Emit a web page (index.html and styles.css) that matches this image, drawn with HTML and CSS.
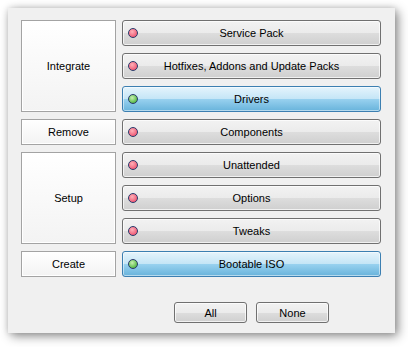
FILE: index.html
```html
<!DOCTYPE html>
<html>
<head>
<meta charset="utf-8">
<link rel="stylesheet" href="styles.css">
</head>
<body>
<div class="panel">
  <div class="grid">
    <div class="group g-int">Integrate</div>
    <div class="group g-rem">Remove</div>
    <div class="group g-set">Setup</div>
    <div class="group g-cre">Create</div>

    <div class="btn"><span class="dot red"></span>Service Pack</div>
    <div class="btn"><span class="dot red"></span>Hotfixes, Addons and Update Packs</div>
    <div class="btn on"><span class="dot green"></span>Drivers</div>
    <div class="btn"><span class="dot red"></span>Components</div>
    <div class="btn"><span class="dot red"></span>Unattended</div>
    <div class="btn"><span class="dot red"></span>Options</div>
    <div class="btn"><span class="dot red"></span>Tweaks</div>
    <div class="btn on"><span class="dot green"></span>Bootable ISO</div>

    <div class="bottom">
      <div class="sbtn">All</div>
      <div class="sbtn">None</div>
    </div>
  </div>
</div>
</body>
</html>
```
FILE: styles.css
```css
html, body {
  margin: 0;
  padding: 0;
  background: #ffffff;
}
body {
  width: 408px;
  height: 347px;
  overflow: hidden;
  font-family: "Liberation Sans", Arial, sans-serif;
  font-size: 11px;
  color: #000;
}
.panel {
  margin: 8px 0 0 8px;
  width: 374px;
  height: 313px;
  padding: 12px 0 0 13px;
  background: #f0f0f0;
  box-shadow: 3px 3px 10px rgba(0,0,0,0.45), 0 0 6px rgba(0,0,0,0.12);
}
.grid {
  display: grid;
  grid-template-columns: 95px 259px;
  grid-template-rows: repeat(8, 26px) auto;
  column-gap: 6px;
  row-gap: 7px;
}
.group {
  grid-column: 1;
  box-sizing: border-box;
  border: 1px solid #a3a3a3;
  background: linear-gradient(to bottom, #ffffff, #f3f3f3);
  box-shadow: inset 0 0 0 1px #ffffff;
  display: flex;
  align-items: center;
  justify-content: center;
}
.g-int { grid-row: 1 / 4; }
.g-rem { grid-row: 4; }
.g-set { grid-row: 5 / 8; }
.g-cre { grid-row: 8; }
.btn {
  grid-column: 2;
  position: relative;
  box-sizing: border-box;
  border: 1px solid #707070;
  border-radius: 3px;
  background: linear-gradient(to bottom, #f2f2f2 0%, #ebebeb 50%, #dddddd 51%, #cfcfcf 100%);
  box-shadow: inset 0 0 0 1px rgba(255,255,255,0.7);
  display: flex;
  align-items: center;
  justify-content: center;
}
.btn.on {
  border-color: #3c7fb1;
  background: linear-gradient(to bottom, #e5f4fc 0%, #c4e5f6 50%, #98d1ef 51%, #68b3db 100%);
  box-shadow: inset 0 0 0 1px rgba(255,255,255,0.5);
}
.dot {
  position: absolute;
  left: 5px;
  top: 50%;
  margin-top: -5px;
  width: 8px;
  height: 8px;
  border-radius: 50%;
  border: 1px solid #2a3a6a;
}
.dot.red { background: radial-gradient(circle at 40% 35%, #ffb0b8, #f0607a 70%); }
.dot.green { background: radial-gradient(circle at 40% 35%, #c8f0b0, #5cbc4c 70%); }
.bottom {
  grid-column: 2;
  grid-row: 9;
  display: flex;
  justify-content: center;
  gap: 9px;
  margin-top: 18px;
}
.sbtn {
  box-sizing: border-box;
  width: 73px;
  height: 21px;
  border: 1px solid #707070;
  border-radius: 3px;
  background: linear-gradient(to bottom, #f2f2f2 0%, #ebebeb 50%, #dddddd 51%, #cfcfcf 100%);
  box-shadow: inset 0 0 0 1px rgba(255,255,255,0.7);
  display: flex;
  align-items: center;
  justify-content: center;
}
```
